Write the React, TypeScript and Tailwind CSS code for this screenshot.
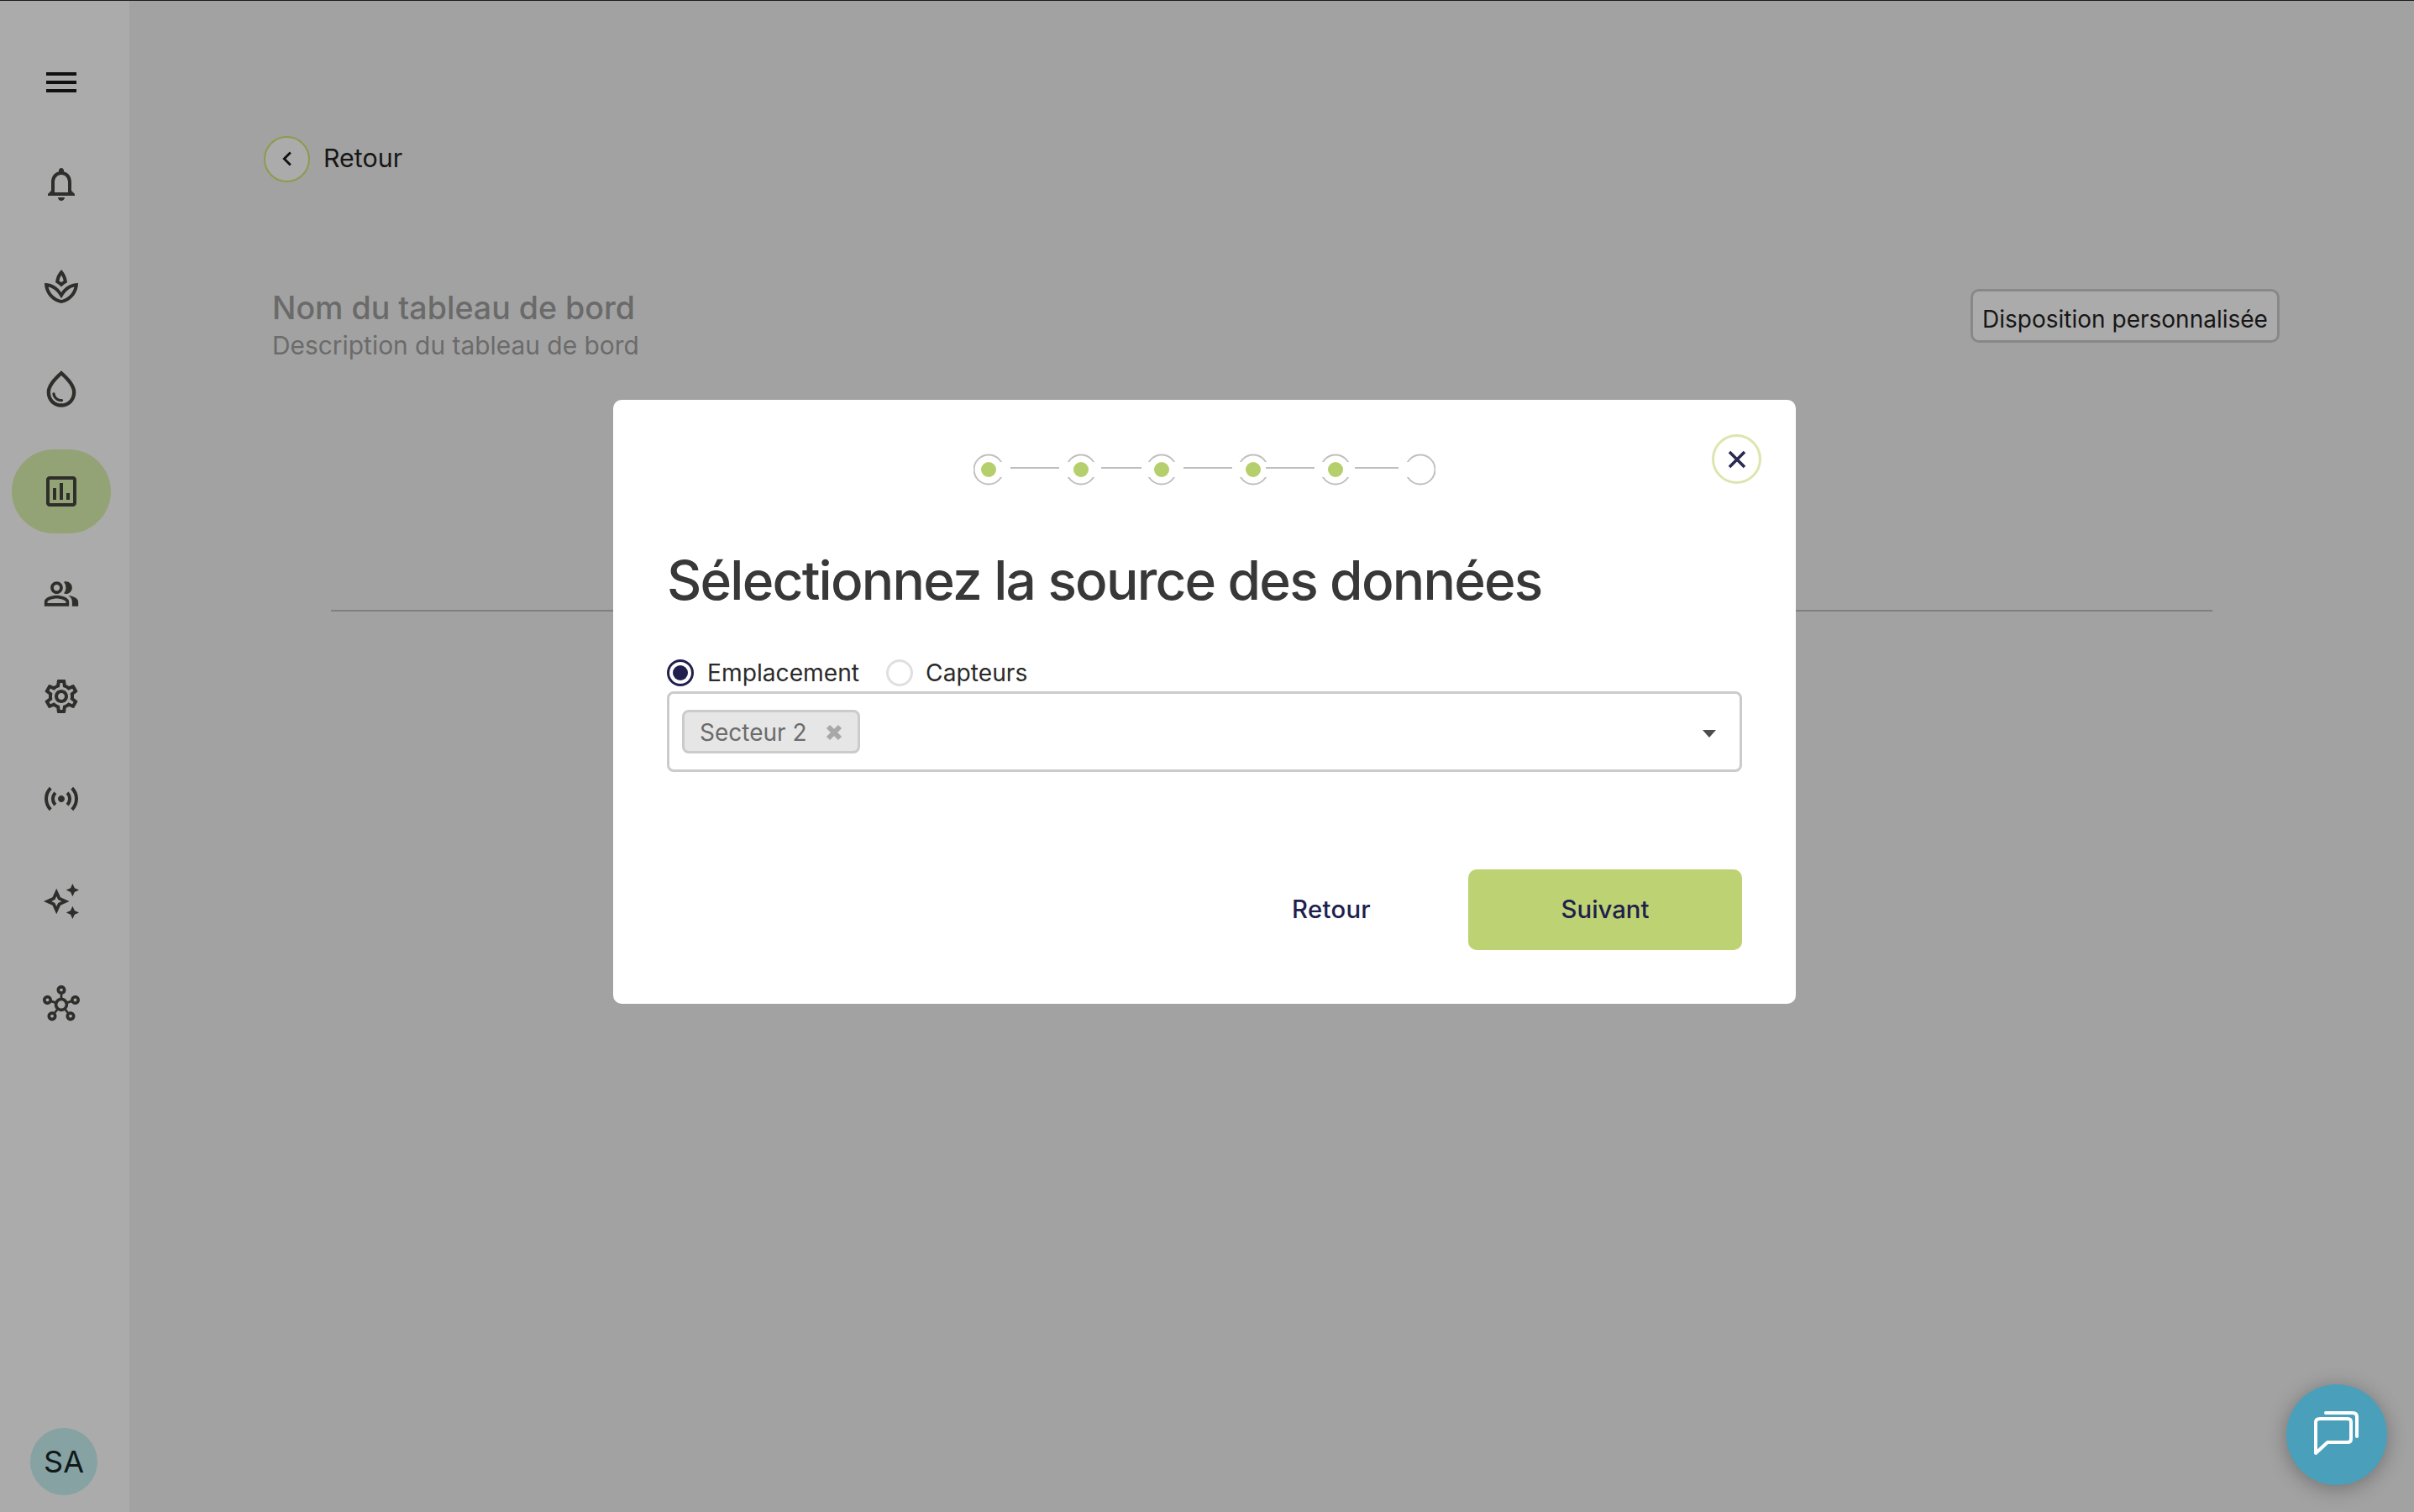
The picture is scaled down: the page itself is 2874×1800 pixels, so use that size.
import React from "react";
import {
  MdMenu,
  MdOutlineNotifications,
  MdOutlineSpa,
  MdOutlineWaterDrop,
  MdOutlineInsertChart,
  MdOutlinePeopleAlt,
  MdOutlineSettings,
  MdOutlineSensors,
  MdOutlineAutoAwesome,
  MdOutlineHub,
  MdChevronLeft,
} from "react-icons/md";

const navIcons = [
  { Icon: MdOutlineNotifications, size: 48 },
  { Icon: MdOutlineSpa, size: 48 },
  { Icon: MdOutlineWaterDrop, size: 52 },
  { Icon: MdOutlineInsertChart, size: 48, active: true },
  { Icon: MdOutlinePeopleAlt, size: 44 },
  { Icon: MdOutlineSettings, size: 48 },
  { Icon: MdOutlineSensors, size: 48 },
  { Icon: MdOutlineAutoAwesome, size: 46 },
  { Icon: MdOutlineHub, size: 44 },
];

function StepDot({ done, left, right }: { done: boolean; left: boolean; right: boolean }) {
  return (
    <svg width="36" height="38" viewBox="0 0 36 38" className="shrink-0">
      <circle cx="18" cy="19" r="17.5" fill="none" stroke="#bfbfbf" strokeWidth="2" />
      {left && <rect x="-1" y="10" width="8" height="18" fill="#fff" />}
      {right && <rect x="29" y="10" width="8" height="18" fill="#fff" />}
      {done && <circle cx="18" cy="19" r="9" fill="#b6cf6d" />}
    </svg>
  );
}

function Connector({ w }: { w: string }) {
  return <div className={`h-[2px] bg-[#bfbfbf] -translate-y-[2px] ${w}`} />;
}

export default function App() {
  return (
    <div className="relative flex h-[1800px] w-[2874px] overflow-hidden border-t border-[#1c1c1c] bg-[#a2a2a2] font-['Inter',sans-serif] text-[28px]">
      <aside className="flex w-[154px] shrink-0 flex-col items-center bg-[#ababab] pr-[8px] pt-[71px]">
        <div className="flex h-[52px] w-full items-center justify-center text-[#111111]">
          <MdMenu size={48} />
        </div>
        <nav className="mt-[45px] flex flex-col items-center">
          {navIcons.map(({ Icon, size, active }, i) => (
            <div
              key={i}
              className={`flex h-[100px] w-[118px] items-center justify-center text-[#2e2f2b] ${
                i > 0 ? "mt-[22px]" : ""
              } ${active ? "rounded-[50px] bg-[#93a376]" : ""}`}
            >
              <Icon size={size} />
            </div>
          ))}
        </nav>
        <div className="mt-auto mb-[20px] ml-[6px] flex h-[80px] w-[80px] items-center justify-center rounded-full bg-[#86a2a3] text-[36px] text-[#101a1a]">
          SA
        </div>
      </aside>

      <main className="flex-1 pl-[160px] pr-[160px] pt-[161px]">
        <div className="flex items-center gap-[16px]">
          <div className="flex h-[55px] w-[55px] items-center justify-center rounded-full border-2 border-[#8a9c4c] bg-[#ababab] text-[#111111]">
            <MdChevronLeft size={34} className="-translate-y-[1px]" />
          </div>
          <span className="-translate-y-[1px] text-[30.4px] text-[#161616]">Retour</span>
        </div>

        <div className="mt-[126px] flex items-start justify-between pl-[10px]">
          <div>
            <h1 className="text-[37.6px] font-medium leading-[48px] text-[#6a6a6a]">Nom du tableau de bord</h1>
            <p className="mt-[2px] text-[29.9px] leading-[36px] text-[#6b6b6b]">Description du tableau de bord</p>
          </div>
          <button className="mt-[1px] flex h-[64px] w-[368px] items-center justify-center rounded-[10px] border-[3px] border-[#888888] bg-[#ababab] pt-[8px] text-[#161616]">
            Disposition personnalisée
          </button>
        </div>

        <div className="mx-[80px] mt-[297px] h-[2px] bg-[#808080]" />
      </main>

      <div className="absolute left-[730px] top-[475px] w-[1408px] rounded-[10px] bg-white px-[64px] pb-[64px]">
        <div className="relative h-[175px] pl-[365px] pt-[64px]">
          <div className="flex items-center">
            <StepDot done left={false} right />
            <Connector w="ml-[8px] w-[58px] mr-[8px]" />
            <StepDot done left right />
            <Connector w="ml-[6px] w-[48px] mr-[6px]" />
            <StepDot done left right />
            <Connector w="ml-[8px] w-[58px] mr-[7px]" />
            <StepDot done left right />
            <Connector w="ml-[-3px] w-[58px] mr-[7px]" />
            <StepDot done left right />
            <Connector w="ml-[5px] w-[52px] mr-[8px]" />
            <StepDot done={false} left right={false} />
          </div>
          <button className="absolute right-[-23px] top-[41px] flex h-[59px] w-[59px] items-center justify-center rounded-full border-[3px] border-[#dbe6ae]">
            <svg width="24" height="24" viewBox="0 0 24 24" fill="none" stroke="#2a2952" strokeWidth="3.6" aria-hidden>
              <path d="M3 3 L21 21 M21 3 L3 21" />
            </svg>
          </button>
        </div>

        <h2 className="text-[64px] font-medium leading-[80px] tracking-[-0.028em] text-[#383838]">Sélectionnez la source des données</h2>

        <div className="mt-[52px] flex items-center gap-[32px] text-[#2a2a2a]">
          <label className="flex items-center gap-[16px] text-[28.2px] leading-[36px]">
            <span className="flex h-[32px] w-[32px] items-center justify-center rounded-full border-[3px] border-[#201f4d]">
              <span className="h-[18px] w-[18px] rounded-full bg-[#201f4d]" />
            </span>
            Emplacement
          </label>
          <label className="flex items-center gap-[15px] text-[28.2px] leading-[36px]">
            <span className="h-[32px] w-[32px] rounded-full border-[3px] border-[#dfdfdf]" />
            Capteurs
          </label>
        </div>

        <div className="mt-[4px] flex h-[96px] items-center justify-between rounded-[8px] border-[3px] border-[#cbcbcb] pl-[15px] pr-[28px]">
          <div className="flex h-[52px] w-[212px] items-center justify-between rounded-[8px] border-[3px] border-[#cbcbcb] bg-[#e6e6e6] pl-[18px] pr-[17px] text-[#6b6b6b]">
            <span className="translate-y-[1px]">Secteur 2</span>
            <svg width="22" height="22" viewBox="0 0 22 22" className="translate-y-[1px]" aria-hidden>
              <path d="M4 4 L18 18 M18 4 L4 18" stroke="#a8a8a8" strokeWidth="6" />
            </svg>
          </div>
          <svg width="16" height="9" viewBox="0 0 16 9" className="translate-y-[2px]" aria-hidden>
            <path d="M0 0 H16 L8 9 Z" fill="#4d4d4d" />
          </svg>
        </div>

        <div className="mt-[116px] flex items-center justify-end text-[29.3px]">
          <button className="font-medium tracking-[0.01em] text-[#201f4d]">Retour</button>
          <button className="ml-[116px] flex h-[96px] w-[326px] items-center justify-center rounded-[10px] bg-[#bdd272] font-medium text-[#201f4d]">
            Suivant
          </button>
        </div>
      </div>

      <button className="absolute left-[2722px] top-[1647px] flex h-[120px] w-[120px] items-center justify-center rounded-full bg-[#4aa0bb] shadow-[0_4px_24px_rgba(0,0,0,0.3)]">
        <svg width="60" height="60" viewBox="0 0 60 60" fill="none" stroke="#fff" strokeWidth="4" strokeLinecap="round" strokeLinejoin="round">
          <path d="M17 4 H49 Q54 4 54 9 V32" />
          <path d="M10 11 H43 Q47 11 47 15 V35 Q47 39 43 39 H19 L5 52 V15 Q5 11 10 11 Z" />
        </svg>
      </button>
    </div>
  );
}
